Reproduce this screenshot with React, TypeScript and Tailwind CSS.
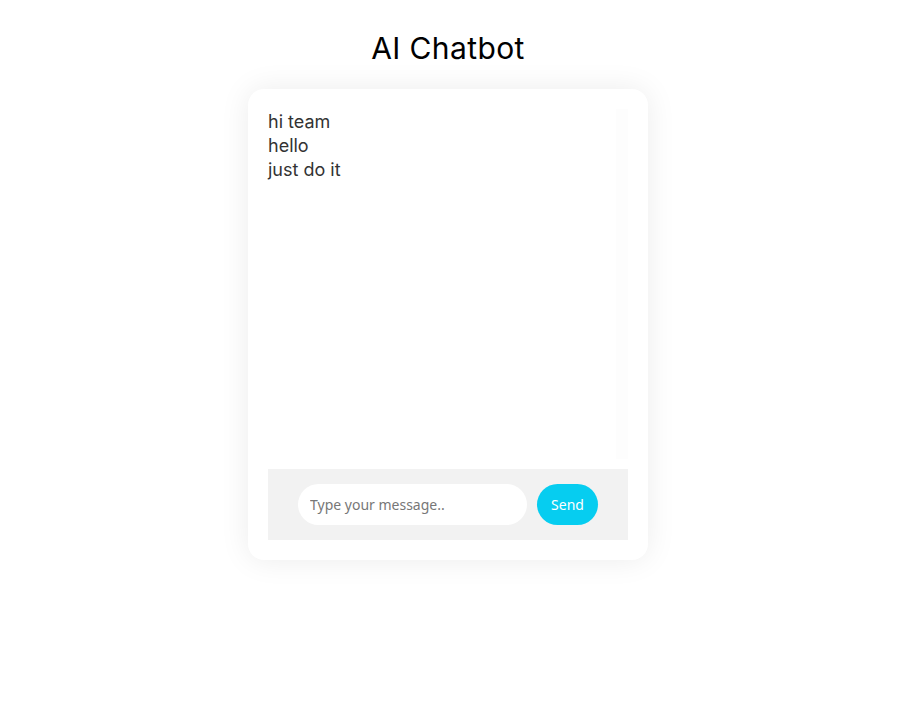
import { useState } from 'react'

const messages = ['hi team', 'hello', 'just do it']

export default function App() {
  const [text, setText] = useState('')
  return (
    <div className="min-h-[726px] bg-white">
      <div className="w-[896px] flex flex-col items-center font-['Inter',sans-serif]">
        <h1 className="mt-[28px] text-[30px] leading-[40px] text-black tracking-[0.4px]">AI Chatbot</h1>
        <div className="mt-[21px] w-[400px] rounded-[16px] bg-white p-5 shadow-[0_0_30px_rgba(0,0,0,0.08)]">
          <div className="h-[350px] flex">
            <div className="flex-1 text-[18px] leading-[24px] text-[#333] pt-[1px]">
              {messages.map((m) => (
                <div key={m}>{m}</div>
              ))}
            </div>
            <div className="w-[12px] bg-[#fdfdfd]" />
          </div>
          <div className="mt-[10px] h-[71px] bg-[#f2f2f2] flex items-center justify-center gap-[10px]">
            <input
              value={text}
              onChange={(e) => setText(e.target.value)}
              placeholder="Type your message.."
              className="w-[229px] h-[41px] rounded-full bg-white px-3 text-[14px] text-[#333] placeholder:text-[#777] outline-none font-['Noto_Sans',sans-serif]"
            />
            <button className="w-[61px] h-[41px] rounded-full bg-[#06cdf0] text-white text-[14px] font-['Noto_Sans',sans-serif]">
              Send
            </button>
          </div>
        </div>
      </div>
    </div>
  )
}
